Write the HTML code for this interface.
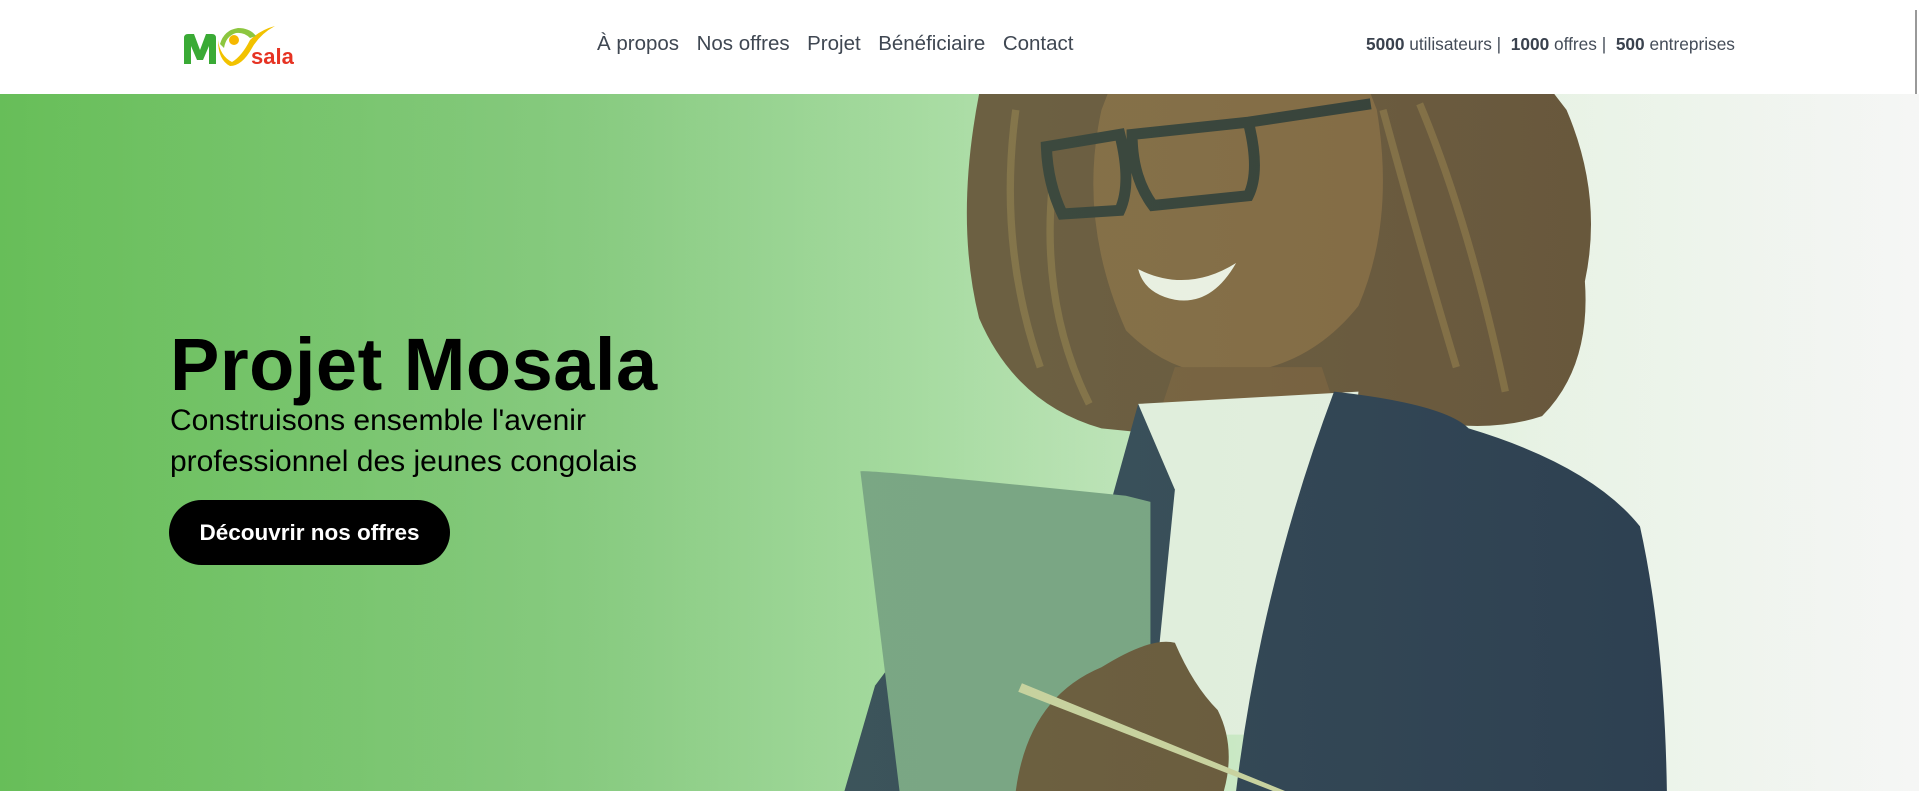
<!DOCTYPE html>
<html><head><meta charset="utf-8">
<style>
*{margin:0;padding:0;box-sizing:border-box}
html,body{width:1919px;height:791px;overflow:hidden;background:#fff;font-family:"Liberation Sans",Arial,sans-serif}
header{position:absolute;left:0;top:0;width:1919px;height:94px;background:#fff}
nav{position:absolute;left:597px;top:32px;font-size:20.5px;color:#3f4752;white-space:nowrap}
nav span{margin-right:17.5px}
.stats{position:absolute;left:1366px;top:34px;font-size:17.3px;color:#444c58;white-space:nowrap}
.stats b{color:#3a424e}
.hero{position:absolute;left:0;top:94px;width:1919px;height:697px;overflow:hidden;
background:linear-gradient(90deg,#5ab849 0%,#7ec676 30%,#a3da9d 48%,#cbe9c6 65%,#e9f3e6 80%,#f6f6f6 100%)}
.hero svg{position:absolute;left:0;top:0}
h1{position:absolute;left:170px;font-size:74px;font-weight:bold;color:#000;letter-spacing:0.5px}
.sub{position:absolute;left:170px;font-size:30px;line-height:41px;color:#000}
.btn{position:absolute;left:169px;width:281px;height:65px;border-radius:33px;background:#000;color:#fff;font-weight:bold;font-size:22.5px;text-align:center;line-height:65px}
.sb{position:absolute;right:2px;top:10px;width:2px;height:145px;background:#999}
</style></head><body>
<header>
<svg style="position:absolute;left:180px;top:20px" width="125" height="50" viewBox="0 0 125 50">
<path d="M4 44 L4 18 Q4 14 8 14 L14 14 L20 30 L26 14 L32 14 Q36 14 36 18 L36 44 L29 44 L29 26 L23 40 L17 40 L11 26 L11 44 Z" fill="#3aaa35"/>
<path d="M38 20 Q40 36 52 42 Q62 36 70 20 Q80 10 95 6 Q80 14 72 28 Q62 46 50 46 Q38 40 38 20 Z" fill="#f2c200"/>
<path d="M40 24 Q44 10 58 8 Q70 8 76 16 L70 18 Q64 12 56 13 Q46 16 44 28 Z" fill="#8cc63f"/>
<circle cx="54" cy="20" r="5" fill="#f6b800"/>
<text x="71" y="44" font-family="Liberation Sans,Arial,sans-serif" font-weight="bold" font-size="22" fill="#e63323">sala</text>
</svg>
<nav><span>À propos</span><span>Nos offres</span><span>Projet</span><span>Bénéficiaire</span><span>Contact</span></nav>
<div class="stats"><b>5000</b> utilisateurs |&nbsp; <b>1000</b> offres |&nbsp; <b>500</b> entreprises</div>
<div class="sb"></div>
</header>
<div class="hero">
<svg width="1919" height="697" viewBox="0 77 1568 569" preserveAspectRatio="none">
<defs><linearGradient id="ov" x1="0" x2="1"><stop offset="0" stop-color="#8fd088" stop-opacity=".25"/><stop offset="1" stop-color="#e8f2e6" stop-opacity=".05"/></linearGradient></defs>
<path d="M800 77 Q780 180 800 260 Q830 330 900 350 L1000 360 L1110 330 Q1200 360 1260 340 Q1300 300 1295 230 Q1310 160 1280 90 L1270 77 Z" fill="#5e4a2e"/>
<path d="M1130 90 Q1160 200 1190 300 M1160 85 Q1200 180 1230 320 M830 90 Q815 200 850 300 M860 150 Q850 250 890 330" stroke="#7a6338" stroke-width="6" fill="none"/>
<path d="M900 90 Q880 180 920 270 Q960 310 1010 305 Q1070 300 1110 250 Q1140 180 1125 90 L1120 77 L905 77 Z" fill="#7b5e36"/>
<path d="M960 300 L1080 300 L1100 360 L940 360 Z" fill="#6d5230"/>
<path d="M855 120 L915 110 Q925 150 915 172 L868 175 Q856 150 855 120 Z M925 110 L1020 100 Q1030 140 1020 160 L942 168 Q925 145 925 110 Z M1020 100 L1120 85" fill="none" stroke="#26302a" stroke-width="9"/>
<path d="M930 220 Q970 240 1010 215 Q990 250 960 245 Q935 240 930 220 Z" fill="#eef2e6"/>
<path d="M930 330 L1110 320 L1080 600 L940 600 Z" fill="#e4efe0"/>
<path d="M1090 320 Q1180 330 1200 350 Q1300 380 1340 430 Q1360 520 1362 646 L1010 646 Q1030 480 1090 320 Z" fill="#1f3246"/>
<path d="M690 646 L715 560 L760 500 L760 646 Z" fill="#24394a"/>
<path d="M930 330 L960 400 L940 600 L920 646 L900 646 L905 420 Z" fill="#24394a"/>
<path d="M703 385 Q705 383 920 405 L940 410 L940 646 L735 646 Z" fill="#6f9c7b"/>
<path d="M830 646 Q840 570 900 545 Q940 520 960 525 Q975 560 995 580 Q1010 610 1000 646 Z" fill="#5e4a2c"/>
<path d="M835 558 L1050 646 L1040 646 L832 565 Z" fill="#c8cf9a"/>
<rect x="0" y="77" width="1568" height="569" fill="url(#ov)"/>
</svg>
<h1 style="top:228px">Projet Mosala</h1>
<div class="sub" style="top:306px">Construisons ensemble l'avenir<br>professionnel des jeunes congolais</div>
<div class="btn" style="top:406px">Découvrir nos offres</div>
</div>
</body></html>
